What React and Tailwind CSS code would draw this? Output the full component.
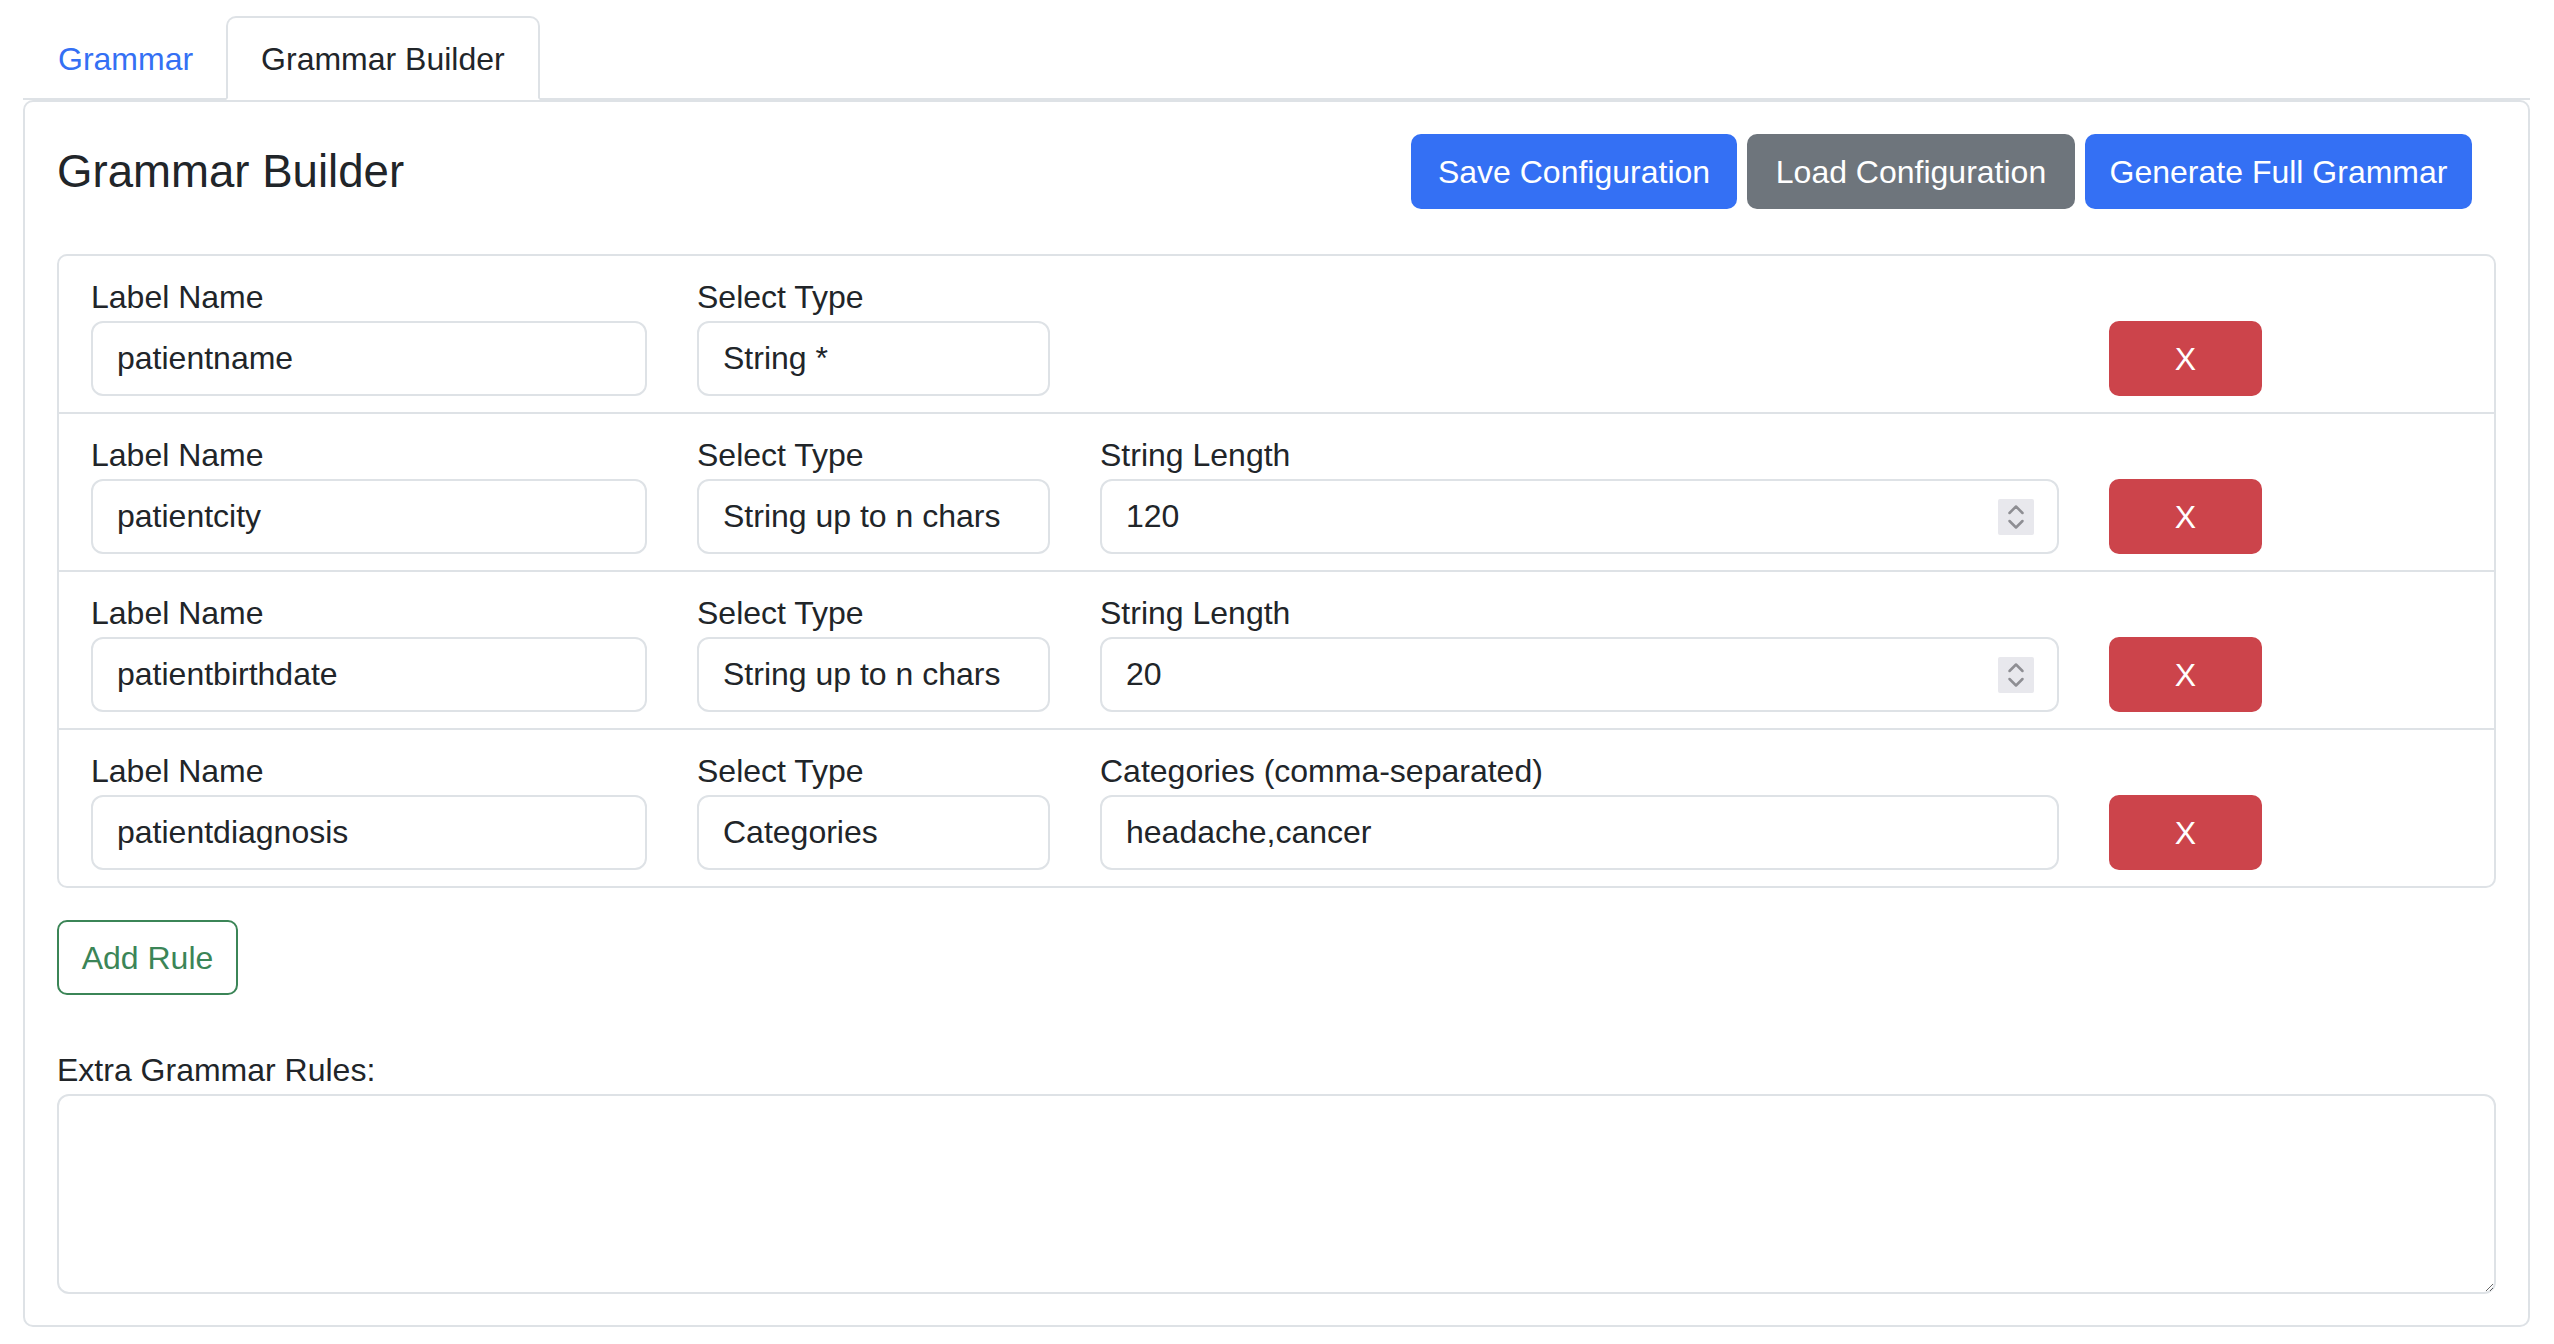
import React from "react";

const FONT = "font-['Liberation_Sans',Arial,Helvetica,sans-serif]";

function Field({ label, value, width }) {
  return (
    <div className={`flex flex-col shrink-0 ${width}`}>
      <label className="text-[32px] leading-[48px] text-[#212529]">{label}</label>
      <input
        defaultValue={value}
        className={`h-[75px] w-full border-2 border-[#dee2e6] rounded-[12px] px-[24px] text-[32px] text-[#212529] bg-white outline-none ${FONT}`}
      />
    </div>
  );
}

function Spinner() {
  return (
    <svg width="36" height="36" viewBox="0 0 36 36" className="shrink-0">
      <rect x="0" y="0" width="36" height="36" rx="2" fill="#e8e8ed" />
      <polyline points="11.5,14 18,7.5 24.5,14" fill="none" stroke="#8e8e93" strokeWidth="2.5" strokeLinecap="round" strokeLinejoin="round" />
      <polyline points="11.5,22 18,28.5 24.5,22" fill="none" stroke="#8e8e93" strokeWidth="2.5" strokeLinecap="round" strokeLinejoin="round" />
    </svg>
  );
}

function NumberField({ label, value }) {
  return (
    <div className="flex flex-col shrink-0 w-[959px]">
      <label className="text-[32px] leading-[48px] text-[#212529]">{label}</label>
      <div className="h-[75px] w-full border-2 border-[#dee2e6] rounded-[12px] pl-[24px] pr-[23px] flex items-center justify-between bg-white">
        <input
          defaultValue={value}
          className={`flex-1 min-w-0 h-full text-[32px] text-[#212529] bg-transparent outline-none ${FONT}`}
        />
        <Spinner />
      </div>
    </div>
  );
}

function DeleteButton() {
  return (
    <button className={`shrink-0 w-[153px] h-[75px] rounded-[10px] bg-[#cc444b] text-white text-[32px] ${FONT}`}>
      X
    </button>
  );
}

function Row({ children }) {
  return (
    <div className="flex items-end gap-[50px] px-[32px] pt-[17px] pb-[16px]">
      {children}
    </div>
  );
}

export default function App() {
  return (
    <div className={`min-h-screen bg-white pl-[23px] pr-[24px] pt-[16px] pb-[18px] text-[#212529] ${FONT}`}>
      {/* Tabs */}
      <div className="flex border-b-2 border-[#dee2e6]">
        <div className="-mb-[2px] border-2 border-transparent rounded-t-[10px] px-[33px] pt-[17px] pb-[15px] text-[32px] leading-[48px] text-[#3470f4]">
          Grammar
        </div>
        <div className="-mb-[2px] -ml-[2px] border-2 border-[#dee2e6] border-b-white bg-white rounded-t-[10px] px-[33px] pt-[17px] pb-[15px] text-[32px] leading-[48px] text-[#212529]">
          Grammar Builder
        </div>
      </div>

      {/* Card */}
      <div className="border-2 border-[#dee2e6] rounded-[10px] px-[32px] pt-[32px] pb-[31px]">
        <div className="flex items-center justify-between h-[75px] mb-[45px]">
          <h3 className="text-[45.6px] leading-[55px] font-normal text-[#212529]">Grammar Builder</h3>
          <div className="flex gap-[10px] mr-[24px]">
            <button className={`w-[326px] h-[75px] rounded-[10px] bg-[#3470f4] text-white text-[32px] ${FONT}`}>
              Save Configuration
            </button>
            <button className={`w-[328px] h-[75px] rounded-[10px] bg-[#6e757c] text-white text-[32px] ${FONT}`}>
              Load Configuration
            </button>
            <button className={`w-[387px] h-[75px] rounded-[10px] bg-[#3470f4] text-white text-[32px] ${FONT}`}>
              Generate Full Grammar
            </button>
          </div>
        </div>

        {/* Rules list */}
        <div className="border-2 border-[#dee2e6] rounded-[10px] divide-y-2 divide-[#dee2e6]">
          <Row>
            <Field label="Label Name" value="patientname" width="w-[556px]" />
            <Field label="Select Type" value="String *" width="w-[353px]" />
            <div className="shrink-0 w-[959px]" />
            <DeleteButton />
          </Row>
          <Row>
            <Field label="Label Name" value="patientcity" width="w-[556px]" />
            <Field label="Select Type" value="String up to n chars" width="w-[353px]" />
            <NumberField label="String Length" value="120" />
            <DeleteButton />
          </Row>
          <Row>
            <Field label="Label Name" value="patientbirthdate" width="w-[556px]" />
            <Field label="Select Type" value="String up to n chars" width="w-[353px]" />
            <NumberField label="String Length" value="20" />
            <DeleteButton />
          </Row>
          <Row>
            <Field label="Label Name" value="patientdiagnosis" width="w-[556px]" />
            <Field label="Select Type" value="Categories" width="w-[353px]" />
            <Field label="Categories (comma-separated)" value="headache,cancer" width="w-[959px]" />
            <DeleteButton />
          </Row>
        </div>

        <button className={`mt-[32px] w-[181px] h-[75px] border-2 border-[#3b8557] rounded-[10px] text-[#3b8557] text-[32px] bg-white ${FONT}`}>
          Add Rule
        </button>

        <div className="mt-[51px]">
          <label className="block text-[32px] leading-[48px] text-[#212529]">Extra Grammar Rules:</label>
          <textarea className={`block w-full h-[200px] border-2 border-[#dee2e6] rounded-[12px] px-[24px] py-[12px] text-[32px] outline-none ${FONT}`} />
        </div>
      </div>
    </div>
  );
}
